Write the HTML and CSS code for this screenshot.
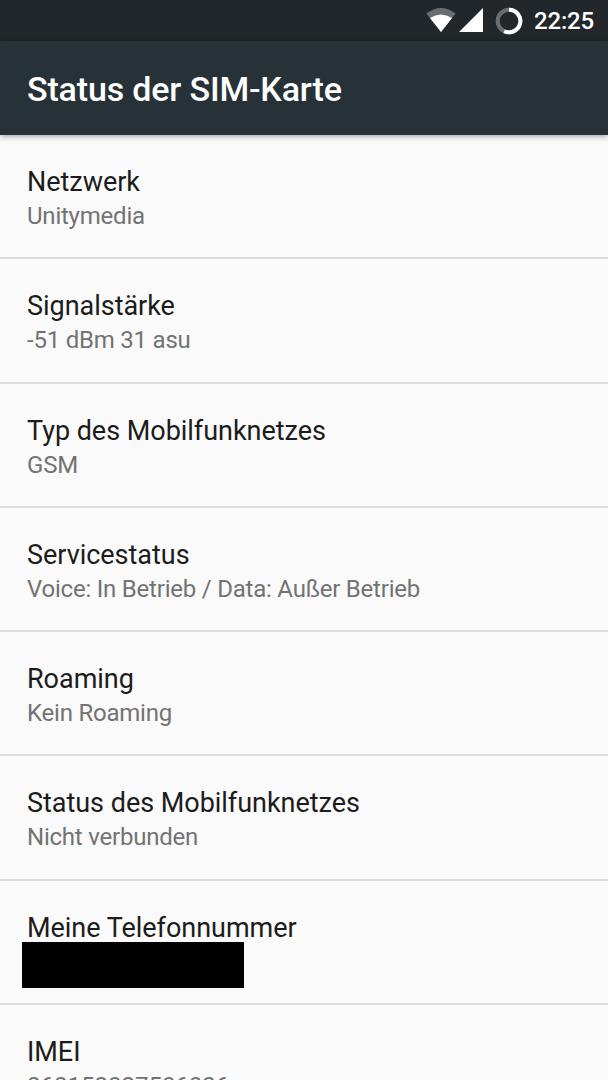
FILE: index.html
```html
<!DOCTYPE html>
<html lang="de">
<head>
    <meta charset="UTF-8">
    <meta name="viewport" content="width=device-width, initial-scale=1.0">
    <title>Status der SIM-Karte</title>
    <link rel="stylesheet" href="styles.css">
</head>
<body>
    <div class="statusbar">
        <svg class="wifi" width="30" height="24" viewBox="0 0 30 24">
            <path d="M15 24 L0.3 5.6 Q15 -5.6 29.7 5.6 Z" fill="#6b6e70"/>
            <path d="M15 24 L4 10 Q15 3 26 10 Z" fill="#fff"/>
        </svg>
        <svg class="signal" width="24" height="24" viewBox="0 0 24 24">
            <path d="M0 24 L24 0 V24 Z" fill="#fff"/>
        </svg>
        <svg class="battery" width="28" height="28" viewBox="0 0 28 28">
            <circle cx="14" cy="14" r="11.3" fill="none" stroke="#6b6e70" stroke-width="4"/>
            <path d="M14 2.7 A11.3 11.3 0 1 1 9.2 24.2" fill="none" stroke="#fff" stroke-width="4"/>
        </svg>
        <span class="clock">22:25</span>
    </div>
    <header class="toolbar">
        <h1>Status der SIM-Karte</h1>
    </header>
    <ul class="list">
        <li><div class="title">Netzwerk</div><div class="summary">Unitymedia</div></li>
        <li><div class="title">Signalstärke</div><div class="summary">-51 dBm 31 asu</div></li>
        <li><div class="title">Typ des Mobilfunknetzes</div><div class="summary">GSM</div></li>
        <li><div class="title">Servicestatus</div><div class="summary">Voice: In Betrieb / Data: Außer Betrieb</div></li>
        <li><div class="title">Roaming</div><div class="summary">Kein Roaming</div></li>
        <li><div class="title">Status des Mobilfunknetzes</div><div class="summary">Nicht verbunden</div></li>
        <li><div class="title">Meine Telefonnummer</div><div class="redacted"></div></li>
        <li><div class="title">IMEI</div><div class="summary imei">868152027506026</div></li>
    </ul>
</body>
</html>
```

FILE: styles.css
```css
body {
    margin: 0;
    height: 1080px;
    overflow: hidden;
    background-color: #fafafa;
    font-family: Roboto, sans-serif;
}
.statusbar {
    display: flex;
    align-items: center;
    justify-content: flex-end;
    box-sizing: border-box;
    height: 41px;
    padding-right: 14px;
    background-color: #21272b;
}
.wifi, .signal {
    margin-bottom: 1px;
}
.signal {
    margin-left: 3px;
}
.battery {
    margin: 0 11px 0 12.5px;
}
.clock {
    margin-top: 1px;
    color: #fff;
    font-size: 24px;
    font-weight: 500;
    letter-spacing: -0.2px;
}
.toolbar {
    display: flex;
    align-items: center;
    height: 94px;
    padding: 0 27px;
    background-color: #263238;
    box-shadow: 0 1px 6px rgba(0, 0, 0, 0.4);
}
.toolbar h1 {
    margin: 1px 0 0;
    color: #fff;
    font-size: 34px;
    font-weight: 500;
    letter-spacing: -0.16px;
}
.list {
    margin: 0;
    padding: 0;
    list-style: none;
}
.list li {
    box-sizing: border-box;
    height: 124.25px;
    padding: 29px 27px 0;
    border-bottom: 2px solid #dcdcdc;
}
.title {
    height: 36px;
    color: #1c1c1c;
    font-size: 27px;
    letter-spacing: -0.03px;
    line-height: 36px;
    white-space: nowrap;
}
.summary {
    color: #737373;
    font-size: 24px;
    letter-spacing: -0.22px;
    line-height: 32px;
    white-space: nowrap;
}
.imei {
    letter-spacing: 0;
}
.redacted {
    width: 222px;
    height: 46px;
    margin: -4px 0 0 -5px;
    background-color: #000;
}
```
